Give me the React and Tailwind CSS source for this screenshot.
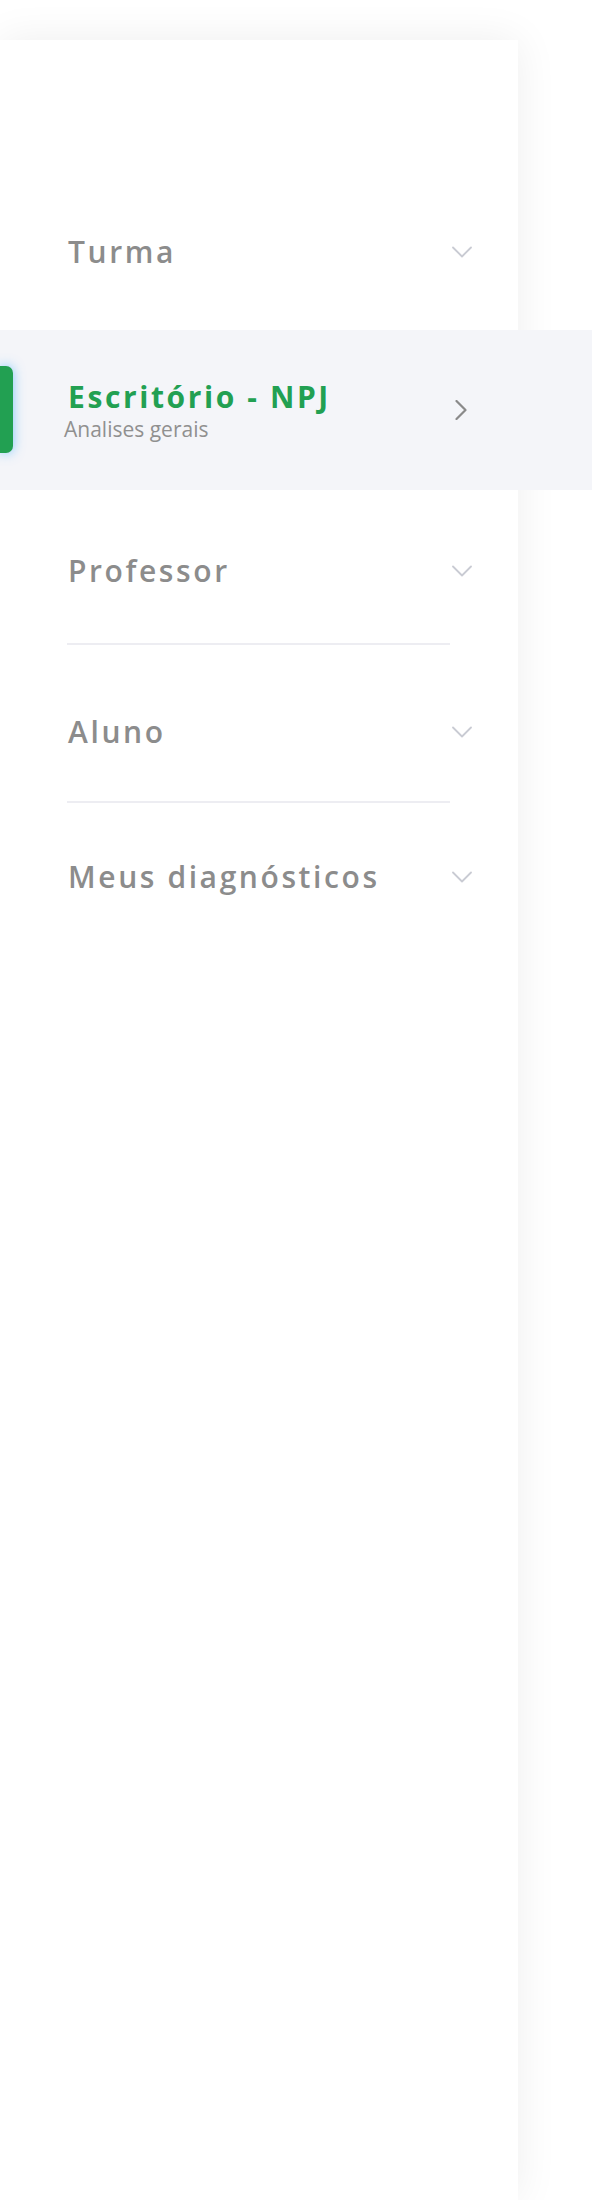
import React from "react";

const ChevronDown = () => (
  <svg width="20" height="12" viewBox="0 0 20 12" fill="none">
    <path d="M1 1.5 L10 10.5 L19 1.5" stroke="#c9cbd3" strokeWidth="1.8" strokeLinecap="round" strokeLinejoin="round" />
  </svg>
);

const ChevronRight = () => (
  <svg width="12" height="20" viewBox="0 0 12 20" fill="none">
    <path d="M1.5 1 L10.5 10 L1.5 19" stroke="#8a8a8a" strokeWidth="2.2" strokeLinecap="round" strokeLinejoin="round" />
  </svg>
);

const font = { fontFamily: '"Open Sans", "Noto Sans", sans-serif' };

function Label({ children }) {
  return (
    <span className="text-[30px] font-semibold leading-[40px] tracking-[2.6px] text-[#8c8c8c]">{children}</span>
  );
}

export default function App() {
  return (
    <div className="h-[2200px] w-[592px] overflow-hidden bg-white pt-[40px]" style={font}>
      <div className="h-[2160px] w-[518px] bg-white pt-[172px] shadow-[0_0_40px_rgba(0,0,0,0.07)]">
        {/* Turma */}
        <div className="flex h-[80px] items-center justify-between pl-[68px] pr-[46px]">
          <Label>Turma</Label>
          <ChevronDown />
        </div>

        {/* Active */}
        <div className="relative mt-[38px] flex h-[160px] w-[592px] items-center bg-[#f4f5f9]">
          <div className="absolute left-0 top-[36px] h-[87px] w-[13px] rounded-r-[7px] bg-[#22a052] shadow-[0_0_12px_rgba(80,180,255,0.7)]" />
          <div className="flex w-[518px] items-center justify-between pl-[68px] pr-[51px]">
            <div className="flex flex-col">
              <span className="text-[30px] font-bold leading-[36px] tracking-[2.6px] text-[#22a052]">Escritório - NPJ</span>
              <span className="ml-[-4px] mt-[2px] text-[21px] leading-[24px] text-[#909090]">Analises gerais</span>
            </div>
            <ChevronRight />
          </div>
        </div>

        {/* Professor */}
        <div className="flex items-center justify-between pl-[68px] pr-[46px] pt-[61px] pb-[52px]">
          <Label>Professor</Label>
          <ChevronDown />
        </div>
        <div className="ml-[67px] h-[2px] w-[383px] bg-[#ededf2]" />

        {/* Aluno */}
        <div className="flex items-center justify-between pl-[68px] pr-[46px] pt-[67px] pb-[49px]">
          <Label>Aluno</Label>
          <ChevronDown />
        </div>
        <div className="ml-[67px] h-[2px] w-[383px] bg-[#ededf2]" />

        {/* Meus diagnósticos */}
        <div className="flex items-center justify-between pl-[68px] pr-[46px] pt-[54px]">
          <Label>Meus diagnósticos</Label>
          <ChevronDown />
        </div>
      </div>
    </div>
  );
}
